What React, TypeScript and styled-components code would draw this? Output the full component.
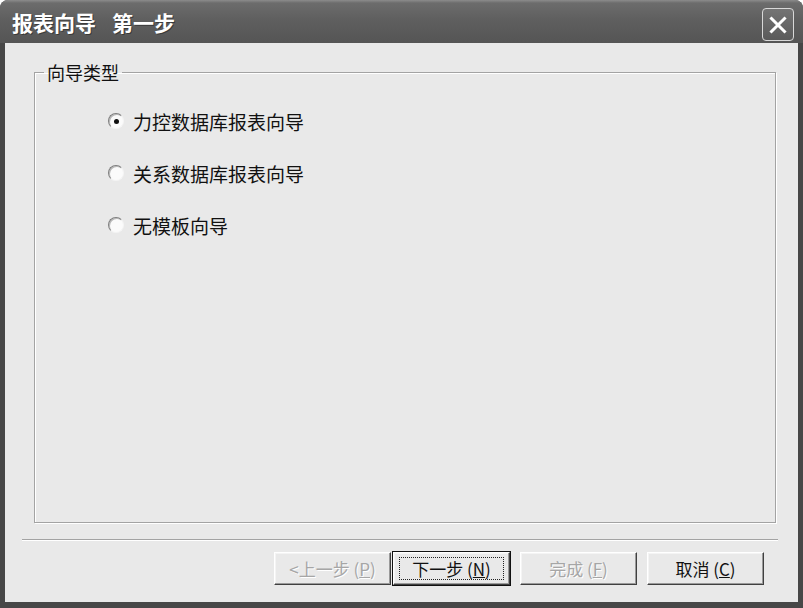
import React from "react";
import styled, { createGlobalStyle } from "styled-components";

const Global = createGlobalStyle`
  html, body { margin: 0; padding: 0; background: #ffffff; }
  body { font-family: "Noto Sans CJK SC", "Liberation Sans", sans-serif; }
  * { box-sizing: border-box; }
`;

const Window = styled.div`
  width: 803px;
  height: 608px;
  display: flex;
  flex-direction: column;
  background: #474747;
  border-radius: 8px 8px 0 0;
  overflow: hidden;
`;

const TitleBar = styled.div`
  height: 43px;
  flex: none;
  display: flex;
  align-items: center;
  justify-content: space-between;
  padding: 0 9px 0 12px;
  background: linear-gradient(#8c8c8c 0px, #6c6c6c 3px, #5f5f5f 45%, #555555 100%);
`;

const Title = styled.div`
  display: flex;
  gap: 16px;
  color: #ffffff;
  font-size: 21px;
  font-weight: 700;
  text-shadow: 1px 1px 0 #3a3a3a;
  margin-top: 1px;
`;

const CloseButton = styled.div`
  align-self: flex-start;
  margin-top: 8px;
  width: 32px;
  height: 33px;
  border: 1px solid #d8d8d8;
  border-radius: 4px;
  background: linear-gradient(#747474, #5a5a5a);
  display: flex;
  align-items: center;
  justify-content: center;
`;

const Client = styled.div`
  flex: 1;
  margin: 0 5px 6px 5px;
  background: #e9e9e9;
  display: flex;
  flex-direction: column;
`;

const Body = styled.div`
  flex: 1;
  display: flex;
  padding: 19px 22px 0 29px;
`;

const GroupBox = styled.fieldset`
  flex: 1;
  margin: 0;
  padding: 0;
  border: 1px solid #a3a3a3;
  box-shadow: inset 1px 1px 0 #ffffff, 1px 1px 0 #ffffff;
  display: flex;
  flex-direction: column;
`;

const Legend = styled.legend`
  margin-left: 9px;
  padding: 0 3px 0 3px;
  font-size: 18px;
  line-height: 20px;
  color: #111111;
`;

const OptionList = styled.div`
  display: flex;
  flex-direction: column;
  padding: 13px 0 0 73px;
`;

const OptionRow = styled.label`
  height: 52px;
  display: flex;
  align-items: center;
  gap: 9px;
  font-size: 19px;
  color: #111111;
`;

const RadioCircle = styled.span<{ $checked?: boolean }>`
  width: 16px;
  height: 16px;
  flex: none;
  border-radius: 50%;
  border: 1px solid;
  border-color: #7e7e7e #f4f4f4 #f4f4f4 #7e7e7e;
  background: #fbfbfb;
  box-shadow: inset 1px 1px 0 #b8b8b8;
  display: flex;
  align-items: center;
  justify-content: center;
  &::after {
    content: "";
    width: 5px;
    height: 5px;
    border-radius: 50%;
    background: ${(p) => (p.$checked ? "#111111" : "transparent")};
  }
`;

const Separator = styled.div`
  height: 2px;
  flex: none;
  margin: 16px 20px 0 17px;
  border-top: 1px solid #a3a3a3;
  border-bottom: 1px solid #ffffff;
`;

const Footer = styled.div`
  flex: none;
  display: flex;
  justify-content: flex-end;
  gap: 10px;
  padding: 11px 34px 17px 0;
`;

const ButtonPair = styled.div`
  display: flex;
  gap: 2px;
`;

const Button = styled.div<{ $disabled?: boolean; $default?: boolean }>`
  width: 117px;
  height: 33px;
  display: flex;
  align-items: center;
  justify-content: center;
  background: #e9e9e9;
  border: 1px solid;
  border-color: #ffffff #404040 #404040 #ffffff;
  box-shadow: inset -1px -1px 0 #9a9a9a, inset 1px 1px 0 #f4f4f4;
  outline: ${(p) => (p.$default ? "1px solid #111111" : "none")};
  font-size: 17px;
  color: ${(p) => (p.$disabled ? "#a6a6a6" : "#111111")};
  text-shadow: ${(p) => (p.$disabled ? "1px 1px 0 #ffffff" : "none")};
  white-space: pre;
`;

const FocusRect = styled.span`
  display: flex;
  align-items: center;
  justify-content: center;
  width: 105px;
  height: 23px;
  border: 1px dotted #222222;
`;

const Mnemonic = styled.span`
  text-decoration: underline;
`;

const options = [
  { label: "力控数据库报表向导", checked: true },
  { label: "关系数据库报表向导", checked: false },
  { label: "无模板向导", checked: false },
];

export default function App() {
  return (
    <>
      <Global />
      <Window>
        <TitleBar>
          <Title>
            <span>报表向导</span>
            <span>第一步</span>
          </Title>
          <CloseButton>
            <svg width="18" height="18" viewBox="0 0 18 18">
              <path d="M2.5 2.5 L15.5 15.5 M15.5 2.5 L2.5 15.5" stroke="#ffffff" strokeWidth="3" strokeLinecap="square" />
            </svg>
          </CloseButton>
        </TitleBar>
        <Client>
          <Body>
            <GroupBox>
              <Legend>向导类型</Legend>
              <OptionList>
                {options.map((o) => (
                  <OptionRow key={o.label}>
                    <RadioCircle $checked={o.checked} />
                    {o.label}
                  </OptionRow>
                ))}
              </OptionList>
            </GroupBox>
          </Body>
          <Separator />
          <Footer>
            <ButtonPair>
              <Button $disabled>
                {"<上一步 ("}
                <Mnemonic>P</Mnemonic>
                {")"}
              </Button>
              <Button $default>
                <FocusRect>
                  {"下一步 ("}
                  <Mnemonic>N</Mnemonic>
                  {")"}
                </FocusRect>
              </Button>
            </ButtonPair>
            <Button $disabled>
              {"完成 ("}
              <Mnemonic>F</Mnemonic>
              {")"}
            </Button>
            <Button>
              {"取消 ("}
              <Mnemonic>C</Mnemonic>
              {")"}
            </Button>
          </Footer>
        </Client>
      </Window>
    </>
  );
}
